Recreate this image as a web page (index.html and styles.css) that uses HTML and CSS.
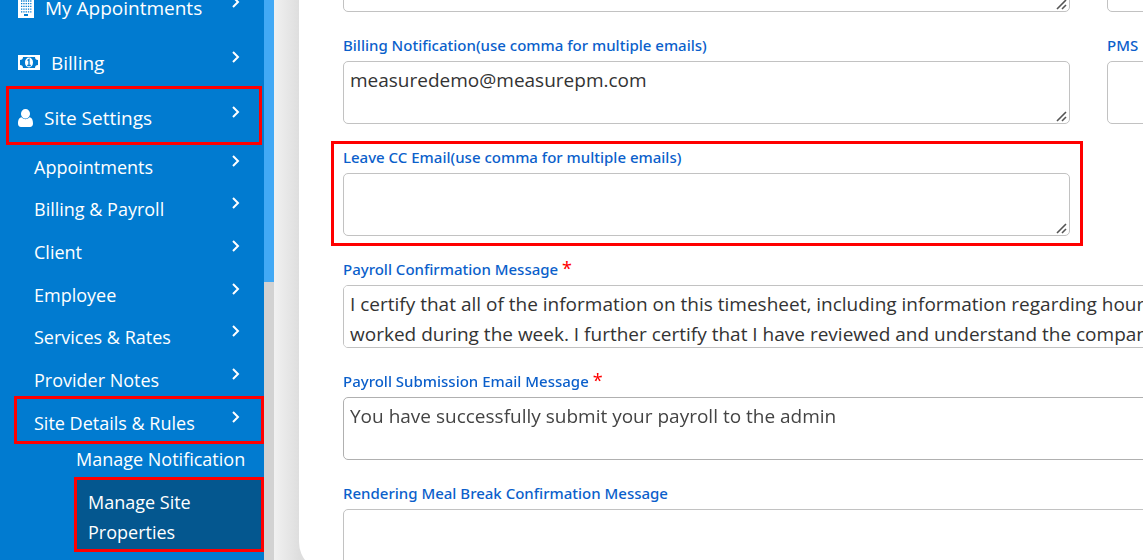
FILE: index.html
```html
<!DOCTYPE html>
<html lang="en">
<head>
<meta charset="utf-8">
<title>Manage Site Properties</title>
<link rel="stylesheet" href="styles.css">
</head>
<body>
<div class="app">
  <nav class="sidebar" aria-label="Main">
    <ul class="menu">
      <li><a class="item" href="#">
        <svg class="icon" width="16" height="20" viewBox="0 0 16 20" aria-hidden="true"><path fill="#fff" d="M0 0h16v20H0z"/><path stroke="#017bd0" stroke-width="1.3" stroke-dasharray="1.3 1" d="M3 3h10.400M3 5.700h10.400M3 8.400h10.400M3 11.100h10.400M3 13.800h10.400"/><path fill="#017bd0" d="M6 16h4v2H6z"/></svg>
        <span class="text">My Appointments</span>
        <svg class="chevron" viewBox="0 0 8 12" aria-hidden="true"><path d="M1 1l5 5-5 5"/></svg></a></li>
      <li><a class="item" href="#">
        <svg class="icon" width="22" height="15" viewBox="0 0 22 15" aria-hidden="true"><path fill="#fff" d="M0 0h22v15H0z"/><path fill="#017bd0" d="M5 2h12a3 3 0 0 0 3 3v5a3 3 0 0 0-3 3H5a3 3 0 0 0-3-3V5a3 3 0 0 0 3-3z"/><ellipse cx="11" cy="7.500" rx="4" ry="5" fill="#fff"/><path fill="none" stroke="#017bd0" stroke-width="1.300" d="M9.500 5.500l1.500-1v6M9.200 10.500h3.600"/></svg>
        <span class="text">Billing</span>
        <svg class="chevron" viewBox="0 0 8 12" aria-hidden="true"><path d="M1 1l5 5-5 5"/></svg></a></li>
      <li><a class="item marked marked-settings" href="#">
        <svg class="icon" width="15" height="18" viewBox="0 0 15 18" aria-hidden="true"><path fill="#fff" d="M7.500 0a4.600 4.600 0 0 1 4.500 4.700c0 2.600-2 4.800-4.500 4.800S3 7.300 3 4.700A4.600 4.600 0 0 1 7.500 0zM3.500 8.300c2.300 2.600 5.700 2.600 8 0 2.600.3 3.500 3.200 3.500 6.200 0 2-1.200 3.500-3 3.500H3c-1.800 0-3-1.500-3-3.500 0-3 .9-5.900 3.500-6.200z"/></svg>
        <span class="text">Site Settings</span>
        <svg class="chevron" viewBox="0 0 8 12" aria-hidden="true"><path d="M1 1l5 5-5 5"/></svg></a>
        <ul class="submenu">
          <li><a class="item sub" href="#"><span class="text">Appointments</span><svg class="chevron" viewBox="0 0 8 12" aria-hidden="true"><path d="M1 1l5 5-5 5"/></svg></a></li>
          <li><a class="item sub" href="#"><span class="text">Billing &amp; Payroll</span><svg class="chevron" viewBox="0 0 8 12" aria-hidden="true"><path d="M1 1l5 5-5 5"/></svg></a></li>
          <li><a class="item sub" href="#"><span class="text">Client</span><svg class="chevron" viewBox="0 0 8 12" aria-hidden="true"><path d="M1 1l5 5-5 5"/></svg></a></li>
          <li><a class="item sub" href="#"><span class="text">Employee</span><svg class="chevron" viewBox="0 0 8 12" aria-hidden="true"><path d="M1 1l5 5-5 5"/></svg></a></li>
          <li><a class="item sub" href="#"><span class="text">Services &amp; Rates</span><svg class="chevron" viewBox="0 0 8 12" aria-hidden="true"><path d="M1 1l5 5-5 5"/></svg></a></li>
          <li><a class="item sub" href="#"><span class="text">Provider Notes</span><svg class="chevron" viewBox="0 0 8 12" aria-hidden="true"><path d="M1 1l5 5-5 5"/></svg></a></li>
          <li><a class="item sub marked marked-rules" href="#"><span class="text">Site Details &amp; Rules</span><svg class="chevron" viewBox="0 0 8 12" aria-hidden="true"><path d="M1 1l5 5-5 5"/></svg></a>
            <ul class="pages">
              <li><a class="page" href="#">Manage Notification</a></li>
              <li><a class="page current" href="#" aria-current="page">Manage Site Properties</a></li>
            </ul>
          </li>
        </ul>
      </li>
    </ul>
  </nav>
  <div class="track"><div class="thumb"></div></div>
  <main class="main">
    <form class="card">
      <div class="field"><textarea aria-label="Notification emails"></textarea></div>
      <div class="field"><textarea aria-label="Notification settings"></textarea></div>
      <div class="field"><label for="billing">Billing Notification(use comma for multiple emails)</label><textarea id="billing">measuredemo@measurepm.com</textarea></div>
      <div class="field"><label for="pms">PMS</label><textarea id="pms"></textarea></div>
      <div class="field marked marked-leave"><label for="leave">Leave CC Email(use comma for multiple emails)</label><textarea id="leave"></textarea></div>
      <div class="field wide"><label for="confirm">Payroll Confirmation Message <span class="required">*</span></label><textarea id="confirm">I certify that all of the information on this timesheet, including information regarding hours
worked during the week. I further certify that I have reviewed and understand the company</textarea></div>
      <div class="field wide"><label for="submission">Payroll Submission Email Message <span class="required">*</span></label><textarea id="submission" class="muted">You have successfully submit your payroll to the admin</textarea></div>
      <div class="field wide"><label for="meal">Rendering Meal Break Confirmation Message</label><textarea id="meal"></textarea></div>
    </form>
  </main>
</div>
</body>
</html>
```
FILE: styles.css
```css
* { box-sizing: border-box; }

body {
  margin: 0;
  font-family: "Open Sans", "Noto Sans", sans-serif;
  background: #fff;
}

ul { list-style: none; margin: 0; padding: 0; }

.app { display: flex; height: 100vh; overflow: hidden; }

/* Sidebar */
.sidebar {
  flex: 0 0 264px;
  overflow: hidden;
  background: #017bd0;
}

.menu { margin-top: -20px; }

.item {
  position: relative;
  display: flex;
  align-items: center;
  height: 55px;
  padding: 0 24px 0 18px;
  color: #fff;
  font-size: 19px;
  line-height: 30px;
  text-decoration: none;
}

.item .text { flex: 1; }
.icon { flex: none; margin-right: 11px; }

.chevron {
  flex: none;
  width: 8px;
  height: 12px;
  margin-bottom: 12px;
  fill: none;
  stroke: #fff;
  stroke-width: 2;
}

.item.sub { height: 43px; padding-left: 34px; font-size: 18px; }
.submenu > li:nth-child(3n + 2) > .item { height: 42px; }

.page {
  display: block;
  margin-left: 76px;
  color: #fff;
  font-size: 18px;
  line-height: 30px;
  text-decoration: none;
}

.page.current {
  margin: 3px 0 0 74px;
  padding: 7px 60px 2px 11px;
  border: 3px solid #f00;
  background: #04578f;
}

/* Red callout frames drawn over the marked entries */
.marked { position: relative; }
.marked::after {
  content: "";
  position: absolute;
  border: 3px solid #f00;
  pointer-events: none;
}
.marked-settings::after { inset: -4px 2px 0 6px; }
.marked-rules::after { inset: -5px 0 0 14px; }
.marked-leave::after { inset: -8px -13px -10px -12px; }

.track { flex: 0 0 10px; background: #d2d2d2; }
.thumb { height: 282px; background: #42a9f5; }

/* Form */
.main {
  flex: 1;
  min-width: 0;
  overflow: hidden;
  padding-left: 25px;
  background: linear-gradient(to right, #f1f1f1, #dedede 25px);
}

.card {
  display: grid;
  grid-template-columns: repeat(2, minmax(727px, 1fr));
  gap: 25px 37px;
  width: max-content;
  min-width: 100%;
  margin-top: -100px;
  padding: 25px 44px 0;
  border-radius: 30px;
  background: #fff;
}

.field {
  display: flex;
  flex-direction: column;
  height: 87px;
  justify-content: flex-end;
}

.field.marked, .field.wide { grid-column: 1 / -1; }
.field.marked { width: 727px; }

label {
  color: #0b5fcb;
  font-family: "Noto Sans", "Open Sans", sans-serif;
  font-size: 15px;
  font-weight: 500;
  line-height: 16px;
  margin-bottom: 8px;
}

.required {
  color: #f00;
  font-size: 18px;
  font-weight: 400;
  line-height: 1px;
}

textarea {
  display: block;
  width: 100%;
  height: 63px;
  padding: 3px 6px;
  border: 1px solid #c2c2c2;
  border-radius: 5px;
  background: #fff;
  color: #333;
  font-family: inherit;
  font-size: 19px;
  line-height: 30px;
  white-space: pre;
}

textarea::-webkit-resizer {
  background: url("data:image/svg+xml,%3Csvg xmlns='http://www.w3.org/2000/svg' width='15' height='15'%3E%3Cpath d='M3 13l9-9M8 13l4-4' fill='none' stroke='%23555' stroke-width='1.6'/%3E%3C/svg%3E") right bottom no-repeat;
}

.muted { color: #444; border-color: #b0b0b0; }
```
